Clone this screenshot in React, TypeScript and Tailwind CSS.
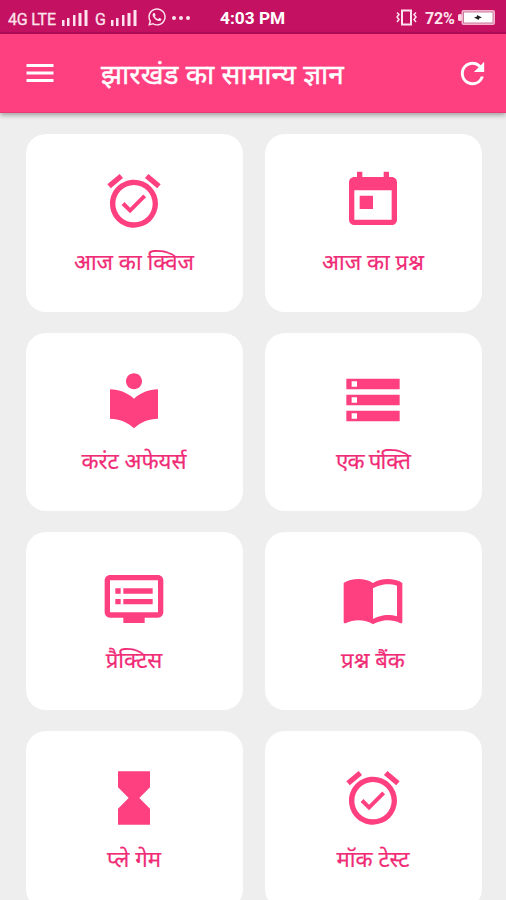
import React from 'react';
import type { IconType } from 'react-icons';
import {
  MdAlarmOn,
  MdDvr,
  MdHourglassFull,
  MdImportContacts,
  MdLocalLibrary,
  MdMenu,
  MdRefresh,
  MdStorage,
  MdToday,
} from 'react-icons/md';
import { FaWhatsapp } from 'react-icons/fa';

interface MenuItem {
  label: string;
  icon: IconType;
  labelClass?: string;
}

const items: MenuItem[] = [
  { label: 'आज का क्विज', icon: MdAlarmOn },
  { label: 'आज का प्रश्न', icon: MdToday },
  { label: 'करंट अफेयर्स', icon: MdLocalLibrary },
  { label: 'एक पंक्ति', icon: MdStorage, labelClass: 'tracking-[-0.8px]' },
  { label: 'प्रैक्टिस', icon: MdDvr },
  { label: 'प्रश्न बैंक', icon: MdImportContacts },
  { label: 'प्ले गेम', icon: MdHourglassFull },
  { label: 'मॉक टेस्ट', icon: MdAlarmOn },
];

const Signal: React.FC = () => (
  <svg width="27" height="16" viewBox="0 0 27 16" fill="currentColor">
    <rect x="1" y="10" width="2.500" height="6" />
    <rect x="6" y="8" width="2.500" height="8" />
    <rect x="12" y="5" width="2.500" height="11" />
    <rect x="17.500" y="3" width="3" height="13" />
    <rect x="23.500" y="0" width="3" height="16" />
  </svg>
);

const Vibrate: React.FC = () => (
  <svg width="21" height="17" viewBox="0 0 21 17" fill="none" stroke="currentColor" strokeWidth="1.500">
    <rect x="6" y="1.500" width="9" height="14" strokeWidth="2" />
    <path d="M1 3.500l2 2-2 2.500 2 2.500-2 2.500" />
    <path d="M20 3.500l-2 2 2 2.500-2 2.500 2 2.500" />
  </svg>
);

const Battery: React.FC = () => (
  <svg width="38" height="17" viewBox="0 0 38 17">
    <rect x="0" y="5" width="4" height="7" rx="1.500" fill="#fbd5e3" />
    <rect x="3.500" y="1" width="33.500" height="15" rx="2" fill="#f4b4cc" />
    <rect x="5.500" y="3" width="29.500" height="11" fill="#fff" stroke="#c77b9b" strokeWidth="1" />
    <path d="M16 8.500l3-1V6l5 2.500-3 1V11z" fill="#222" />
  </svg>
);

const StatusBar: React.FC = () => (
  <div className="flex h-[34px] shrink-0 items-center border-b-2 border-[#b30c59] bg-[#c51162] pt-[3px] font-['Roboto',sans-serif] text-[#fde3ed]">
    <span className="ml-2 mt-[4px] w-[53px] whitespace-nowrap text-[16px] tracking-[-0.2px] [-webkit-text-stroke:0.3px_#fde3ed]">4G LTE</span>
    <Signal />
    <span className="ml-[7px] mt-[4px] w-[15px] text-[16px] [-webkit-text-stroke:0.3px_#fde3ed]">G</span>
    <Signal />
    <FaWhatsapp className="mb-[2px] ml-[10px]" size={20} />
    <div className="ml-[5px] flex gap-[3px]">
      <span className="size-[4px] rounded-full bg-current" />
      <span className="size-[4px] rounded-full bg-current" />
      <span className="size-[4px] rounded-full bg-current" />
    </div>
    <span className="ml-[30px] mt-[2px] w-[66px] whitespace-nowrap text-[17.3px] font-bold text-white">4:03 PM</span>
    <div className="ml-auto mr-[10px] flex items-center">
      <Vibrate />
      <span className="ml-[8px] mr-[2px] mt-[3px] w-[31px] whitespace-nowrap text-[16px] font-bold tracking-[-0.2px]">72%</span>
      <Battery />
    </div>
  </div>
);

const App: React.FC = () => {
  return (
    <div className="flex h-[900px] w-[506px] flex-col overflow-hidden bg-[#eeeeee] font-['Noto_Sans',sans-serif]">
      <StatusBar />

      <header className="flex h-[79px] shrink-0 items-center border-b border-[#e83a74] bg-[#ff4080] pl-[22px] pr-[16px] text-white shadow-[0_2px_5px_rgba(0,0,0,0.35)]">
        <MdMenu className="mb-[1px]" size={36} />
        <h1 className="ml-[43px] mt-[2px] whitespace-nowrap text-[27.9px] leading-none [-webkit-text-stroke:0.4px_white]">झारखंड का सामान्य ज्ञान</h1>
        <MdRefresh className="ml-auto" size={35} />
      </header>

      <main className="grid grid-cols-2 gap-x-[22px] gap-y-[21px] pl-[25.5px] pr-[24.5px] pt-[21px]">
        {items.map((item, i) => (
          <div key={i} className="flex h-[178px] flex-col items-center rounded-[20px] bg-white pt-[35px] text-[#ff4080]">
            <item.icon size={64} />
            <span className={`mt-[13px] whitespace-nowrap text-[22.2px] leading-[32px] text-[#f02c77] [-webkit-text-stroke:0.2px_#f02c77] ${item.labelClass ?? ''}`}>
              {item.label}
            </span>
          </div>
        ))}
      </main>
    </div>
  );
};

export default App;
